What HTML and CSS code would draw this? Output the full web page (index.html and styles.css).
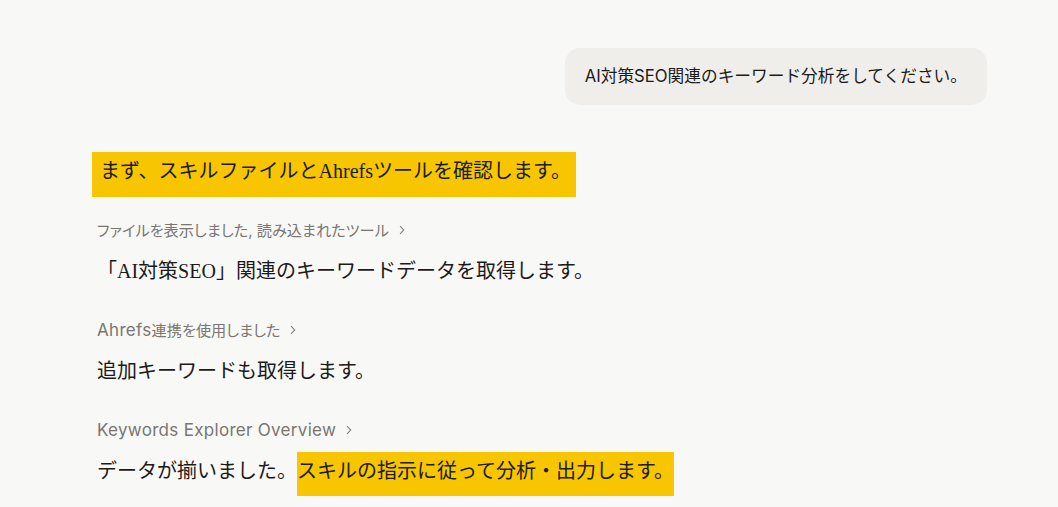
FILE: index.html
```html
<!DOCTYPE html>
<html lang="ja">
<head>
<meta charset="utf-8">
<link rel="stylesheet" href="styles.css">
</head>
<body>
<main class="chat">
  <div class="bubble">AI対策SEO関連のキーワード分析をしてください。</div>
  <div class="reply">
    <p class="line first"><span class="hl-block">まず、スキルファイルとAhrefsツールを確認します。</span></p>
    <div class="label"><span class="text"><span class="ja">ファイルを表示しました, 読み込まれたツール</span></span><svg class="chev" viewBox="0 0 10 10" width="10" height="10"><path d="M3 1.2 L6.8 5 L3 8.8" fill="none" stroke="currentColor" stroke-width="1.1"/></svg></div>
    <p class="line">「AI対策SEO」関連のキーワードデータを取得します。</p>
    <div class="label"><span class="text">Ahrefs<span class="ja">連携を使用しました</span></span><svg class="chev" viewBox="0 0 10 10" width="10" height="10"><path d="M3 1.2 L6.8 5 L3 8.8" fill="none" stroke="currentColor" stroke-width="1.1"/></svg></div>
    <p class="line">追加キーワードも取得します。</p>
    <div class="label"><span class="text">Keywords Explorer Overview</span><svg class="chev" viewBox="0 0 10 10" width="10" height="10"><path d="M3 1.2 L6.8 5 L3 8.8" fill="none" stroke="currentColor" stroke-width="1.1"/></svg></div>
    <p class="line last">データが揃いました。<span class="hl">スキルの指示に従って分析・出力します。</span></p>
  </div>
</main>
</body>
</html>
```
FILE: styles.css
```css
html, body {
  margin: 0;
  padding: 0;
  background: #f8f8f6;
}
body {
  width: 1058px;
  height: 507px;
  overflow: hidden;
}
.chat {
  display: flex;
  flex-direction: column;
  padding: 48px 71px 0 97px;
}
.bubble {
  align-self: flex-end;
  background: #efeeeb;
  border-radius: 15px;
  padding: 14px 20px;
  font-family: Inter, "Noto Sans CJK JP", sans-serif;
  font-size: 16.7px;
  line-height: 29px;
  color: #1c1b1a;
}
.reply {
  display: flex;
  flex-direction: column;
  align-items: flex-start;
}
.line {
  margin: 0;
  font-family: "Liberation Serif", "Noto Sans CJK JP", serif;
  font-size: 20px;
  line-height: 30px;
  color: #1c1b1a;
}
.line.first {
  margin-top: 47px;
  margin-left: -5px;
}
.hl-block {
  display: inline-block;
  background: #f7c600;
  padding: 4px 5px 10px 8px;
  line-height: 31px;
}
.hl {
  background: #f7c600;
  padding: 8px 0 14px;
}
.label {
  display: flex;
  align-items: center;
  gap: 8px;
  height: 24px;
  font-family: Inter, "Noto Sans CJK JP", sans-serif;
  font-size: 17px;
  letter-spacing: 0.3px;
  line-height: 24px;
  color: #7a7671;
  margin-bottom: 14px;
}
.label .text {
  display: block;
  height: 24px;
}
.label .ja {
  font-size: 15.2px;
  line-height: 1;
  letter-spacing: 0;
  font-feature-settings: "palt";
}
.line.first + .label {
  margin-top: 21px;
}
.line + .label {
  margin-top: 32px;
}
.chev {
  color: #8a8782;
}
```
